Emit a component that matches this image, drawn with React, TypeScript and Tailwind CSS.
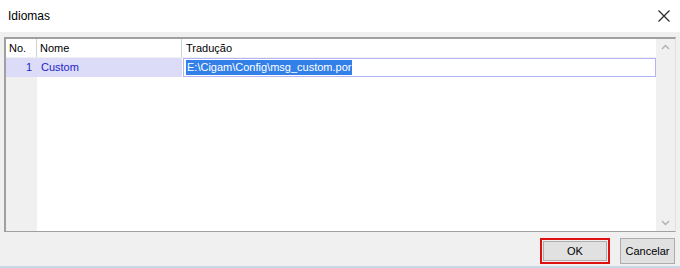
import React from 'react';

export default function App() {
  return (
    <div
      className="w-[680px] h-[268px] bg-[#f0f0f0] flex flex-col text-[11px] text-black overflow-hidden"
      style={{ fontFamily: '"Liberation Sans", Arial, sans-serif' }}
    >
      {/* title bar */}
      <div className="h-[32px] bg-white flex items-center justify-between pl-[8px] pr-[8px]">
        <span className="text-[12px]">Idiomas</span>
        <svg width="14" height="14" viewBox="0 0 14 14" className="mr-[1px]">
          <path d="M1.5 1.5 L12.5 12.5 M12.5 1.5 L1.5 12.5" stroke="#222" strokeWidth="1.1" />
        </svg>
      </div>

      {/* grid */}
      <div className="mx-[4px] mt-[5px] h-[195px] flex border-t-2 border-l-2 border-[#a0a0a0] border-b border-r border-b-[#a0a0a0] border-r-[#e0e0e0] bg-white">
        <div className="flex-1 flex flex-col">
          <div className="h-[19px] flex items-center border-b border-[#f0f0f0]">
            <div className="w-[31px] h-full flex items-center pl-[3px] border-r border-[#d0d0d0]">No.</div>
            <div className="w-[145px] h-full flex items-center pl-[3px] border-r border-[#d0d0d0]">Nome</div>
            <div className="flex-1 h-full flex items-center pl-[4px]">Tradução</div>
          </div>
          <div className="h-[19px] flex items-center">
            <div className="w-[31px] h-full flex items-center justify-end pr-[5px] bg-[#dcdcf8] text-[#2424c8]">1</div>
            <div className="w-[145px] h-full flex items-center pl-[4px] bg-[#dcdcf8] text-[#2424c8]">Custom</div>
            <div className="flex-1 h-full flex items-center pl-[1px]">
              <div className="flex-1 h-full border border-[#b4b4f4] flex items-center pl-[2px]">
                <span className="bg-[#3380e8] text-white leading-[15px] px-[1px]">E:\Cigam\Config\msg_custom.por</span>
              </div>
            </div>
          </div>
          <div className="flex-1 flex">
            <div className="w-[31px] bg-[#f0f0f0]" />
            <div className="flex-1" />
          </div>
        </div>
        {/* scrollbar */}
        <div className="w-[19px] bg-[#f0f0f0] flex flex-col items-center justify-between py-[5px]">
          <svg width="9" height="6" viewBox="0 0 9 6">
            <path d="M1 5 L4.5 1.5 L8 5" stroke="#b0b0b0" strokeWidth="1.4" fill="none" />
          </svg>
          <svg width="9" height="6" viewBox="0 0 9 6">
            <path d="M1 1 L4.5 4.5 L8 1" stroke="#b0b0b0" strokeWidth="1.4" fill="none" />
          </svg>
        </div>
      </div>

      {/* buttons */}
      <div className="flex justify-end items-start gap-[10px] pr-[5px] mt-[6px]">
        <div className="w-[70px] h-[26px] border-2 border-[#e01010] p-[1px]">
          <div className="w-full h-full bg-[#e1e1e1] border border-[#adadad] flex items-center justify-center">OK</div>
        </div>
        <div className="w-[55px] h-[26px] bg-[#e1e1e1] border border-[#adadad] flex items-center justify-center">Cancelar</div>
      </div>
      <div className="flex-1" />
      <div className="h-[2px] bg-[#c8d8e8]" />
    </div>
  );
}
